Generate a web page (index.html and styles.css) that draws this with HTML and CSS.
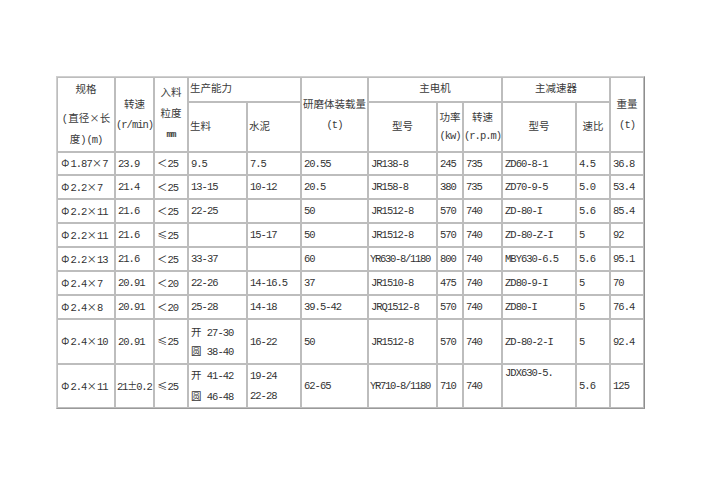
FILE: index.html
```html
<!DOCTYPE html>
<html lang="zh">
<head>
<meta charset="utf-8">
<title>球磨机规格参数</title>
<link rel="stylesheet" href="styles.css">
</head>
<body>
<div class="page">
<table class="spec">
  <colgroup>
    <col class="c58"><col class="c39"><col class="c34"><col class="c59"><col class="c54"><col class="c67">
    <col class="c69"><col class="c26"><col class="c39"><col class="c74"><col class="c34"><col class="c34">
  </colgroup>
  <thead>
    <tr class="h1">
      <th rowspan="2" class="hc top"><div class="gg">规格</div><div class="gl">(直径<span class="fw">×</span>长<br>度)<span class="a">(m)</span></div></th>
      <th rowspan="2" class="hc"><div class="l20">转速</div><div class="l20 a">(r/min)</div></th>
      <th rowspan="2" class="hc"><div class="l21">入料</div><div class="l21">粒度</div><div class="l21 a mm">mm</div></th>
      <th colspan="2" class="hl">生产能力</th>
      <th rowspan="2" class="hc"><div class="l20">研磨体装载量</div><div class="l20 a">(t)</div></th>
      <th colspan="3" class="hc">主电机</th>
      <th colspan="2" class="hc">主减速器</th>
      <th rowspan="2" class="hc"><div class="l20">重量</div><div class="l20 a">(t)</div></th>
    </tr>
    <tr class="h2">
      <th class="hl">生料</th>
      <th class="hl">水泥</th>
      <th class="hc">型号</th>
      <th class="hc"><div class="l18">功率</div><div class="l18 a">(kw)</div></th>
      <th class="hc"><div class="l18">转速</div><div class="l18 a">(r.p.m)</div></th>
      <th class="hc">型号</th>
      <th class="hc">速比</th>
    </tr>
  </thead>
  <tbody>
    <tr class="r23">
      <td><span class="fw">Φ</span>1.87<span class="fw">×</span>7</td><td>23.9</td><td><span class="fw">＜</span>25</td><td>9.5</td><td>7.5</td><td>20.55</td>
      <td>JR138-8</td><td>245</td><td>735</td><td>ZD60-8-1</td><td>4.5</td><td>36.8</td>
    </tr>
    <tr class="r24">
      <td><span class="fw">Φ</span>2.2<span class="fw">×</span>7</td><td>21.4</td><td><span class="fw">＜</span>25</td><td>13-15</td><td>10-12</td><td>20.5</td>
      <td>JR158-8</td><td>380</td><td>735</td><td>ZD70-9-5</td><td>5.0</td><td>53.4</td>
    </tr>
    <tr class="r24">
      <td><span class="fw">Φ</span>2.2<span class="fw">×</span>11</td><td>21.6</td><td><span class="fw">＜</span>25</td><td>22-25</td><td></td><td>50</td>
      <td>JR1512-8</td><td>570</td><td>740</td><td>ZD-80-I</td><td>5.6</td><td>85.4</td>
    </tr>
    <tr class="r24">
      <td><span class="fw">Φ</span>2.2<span class="fw">×</span>11</td><td>21.6</td><td><span class="fw">≤</span>25</td><td></td><td>15-17</td><td>50</td>
      <td>JR1512-8</td><td>570</td><td>740</td><td>ZD-80-Z-I</td><td>5</td><td>92</td>
    </tr>
    <tr class="r24">
      <td><span class="fw">Φ</span>2.2<span class="fw">×</span>13</td><td>21.6</td><td><span class="fw">＜</span>25</td><td>33-37</td><td></td><td>60</td>
      <td class="tight">YR630-8/1180</td><td>800</td><td>740</td><td>MBY630-6.5</td><td>5.6</td><td>95.1</td>
    </tr>
    <tr class="r24">
      <td><span class="fw">Φ</span>2.4<span class="fw">×</span>7</td><td>20.91</td><td><span class="fw">＜</span>20</td><td>22-26</td><td>14-16.5</td><td>37</td>
      <td>JR1510-8</td><td>475</td><td>740</td><td>ZD80-9-I</td><td>5</td><td>70</td>
    </tr>
    <tr class="r24">
      <td><span class="fw">Φ</span>2.4<span class="fw">×</span>8</td><td>20.91</td><td><span class="fw">＜</span>20</td><td>25-28</td><td>14-18</td><td>39.5-42</td>
      <td>JRQ1512-8</td><td>570</td><td>740</td><td>ZD80-I</td><td>5</td><td>76.4</td>
    </tr>
    <tr class="r45">
      <td><span class="fw">Φ</span>2.4<span class="fw">×</span>10</td><td>20.91</td><td><span class="fw">≤</span>25</td>
      <td><div class="l17"><span class="cn">开</span> 27-30</div><div class="l17"><span class="cn">圆</span> 38-40</div></td>
      <td>16-22</td><td>50</td>
      <td>JR1512-8</td><td>570</td><td>740</td><td>ZD-80-2-I</td><td>5</td><td>92.4</td>
    </tr>
    <tr class="r41">
      <td><span class="fw">Φ</span>2.4<span class="fw">×</span>11</td><td class="pm">21<span class="fw fwn">±</span>0.2</td><td><span class="fw">≤</span>25</td>
      <td><div class="l20"><span class="cn">开</span> 41-42</div><div class="l20"><span class="cn">圆</span> 46-48</div></td>
      <td><div class="l20">19-24</div><div class="l20">22-28</div></td>
      <td>62-65</td>
      <td class="tight">YR710-8/1180</td><td>710</td><td>740</td><td class="vt">JDX630-5.</td><td>5.6</td><td>125</td>
    </tr>
  </tbody>
</table>
</div>
</body>
</html>
```
FILE: styles.css
```css
body {
  margin: 0;
  background: #ffffff;
}

.page {
  padding: 76px 0 0 56px;
}

.spec {
  border-collapse: separate;
  border-spacing: 0;
  table-layout: fixed;
  width: 589px;
  border: 1px solid;
  border-color: #cfcfcf #8e8e8e #9a9a9a #cfcfcf;
  font-family: "Liberation Mono", "Noto Sans CJK SC", monospace;
  font-size: 10.5px;
  color: #333333;
  letter-spacing: -1px;
}

.c58 { width: 58px; }
.c39 { width: 39px; }
.c34 { width: 34px; }
.c59 { width: 59px; }
.c54 { width: 54px; }
.c67 { width: 67px; }
.c69 { width: 69px; }
.c26 { width: 26px; }
.c74 { width: 74px; }

.spec th,
.spec td {
  border: 1px solid #bdbdbd;
  padding: 0 0 0 2px;
  vertical-align: middle;
  line-height: 16px;
  white-space: nowrap;
  overflow: hidden;
  font-weight: normal;
}

.spec th {
  letter-spacing: 0;
  color: #3a3a3a;
  padding: 0;
}

.h1 { height: 24px; }
.h2 { height: 49px; }
.r23 { height: 23px; }
.r24 { height: 24px; }
.r45 { height: 45px; }
.r41 { height: 41px; }

.hc { text-align: center; }
.spec th.hl { text-align: left; padding-left: 1px; }
.spec th.top { vertical-align: top; padding-top: 3px; }

.gg { line-height: 18px; margin-bottom: 8px; }
.gl { line-height: 21px; }

.l17 { line-height: 17px; }
.l18 { line-height: 18px; }
.l20 { line-height: 20px; }
.l21 { line-height: 21px; }

.a { letter-spacing: -1px; }
.mm { font-size: 9px; font-weight: bold; }

.fw {
  display: inline-block;
  width: 10.5px;
  text-align: center;
  letter-spacing: 0;
  font-family: "Noto Sans CJK SC", sans-serif;
  font-size: 10px;
}

.fw.fwn { width: 9px; }

.spec td.pm { padding-left: 1px; letter-spacing: -1.2px; }
.spec td.tight { letter-spacing: -1.3px; padding-left: 1px; }

.cn {
  letter-spacing: 0;
  font-family: "Noto Sans CJK SC", sans-serif;
}

.spec td.vt {
  vertical-align: top;
}
```
